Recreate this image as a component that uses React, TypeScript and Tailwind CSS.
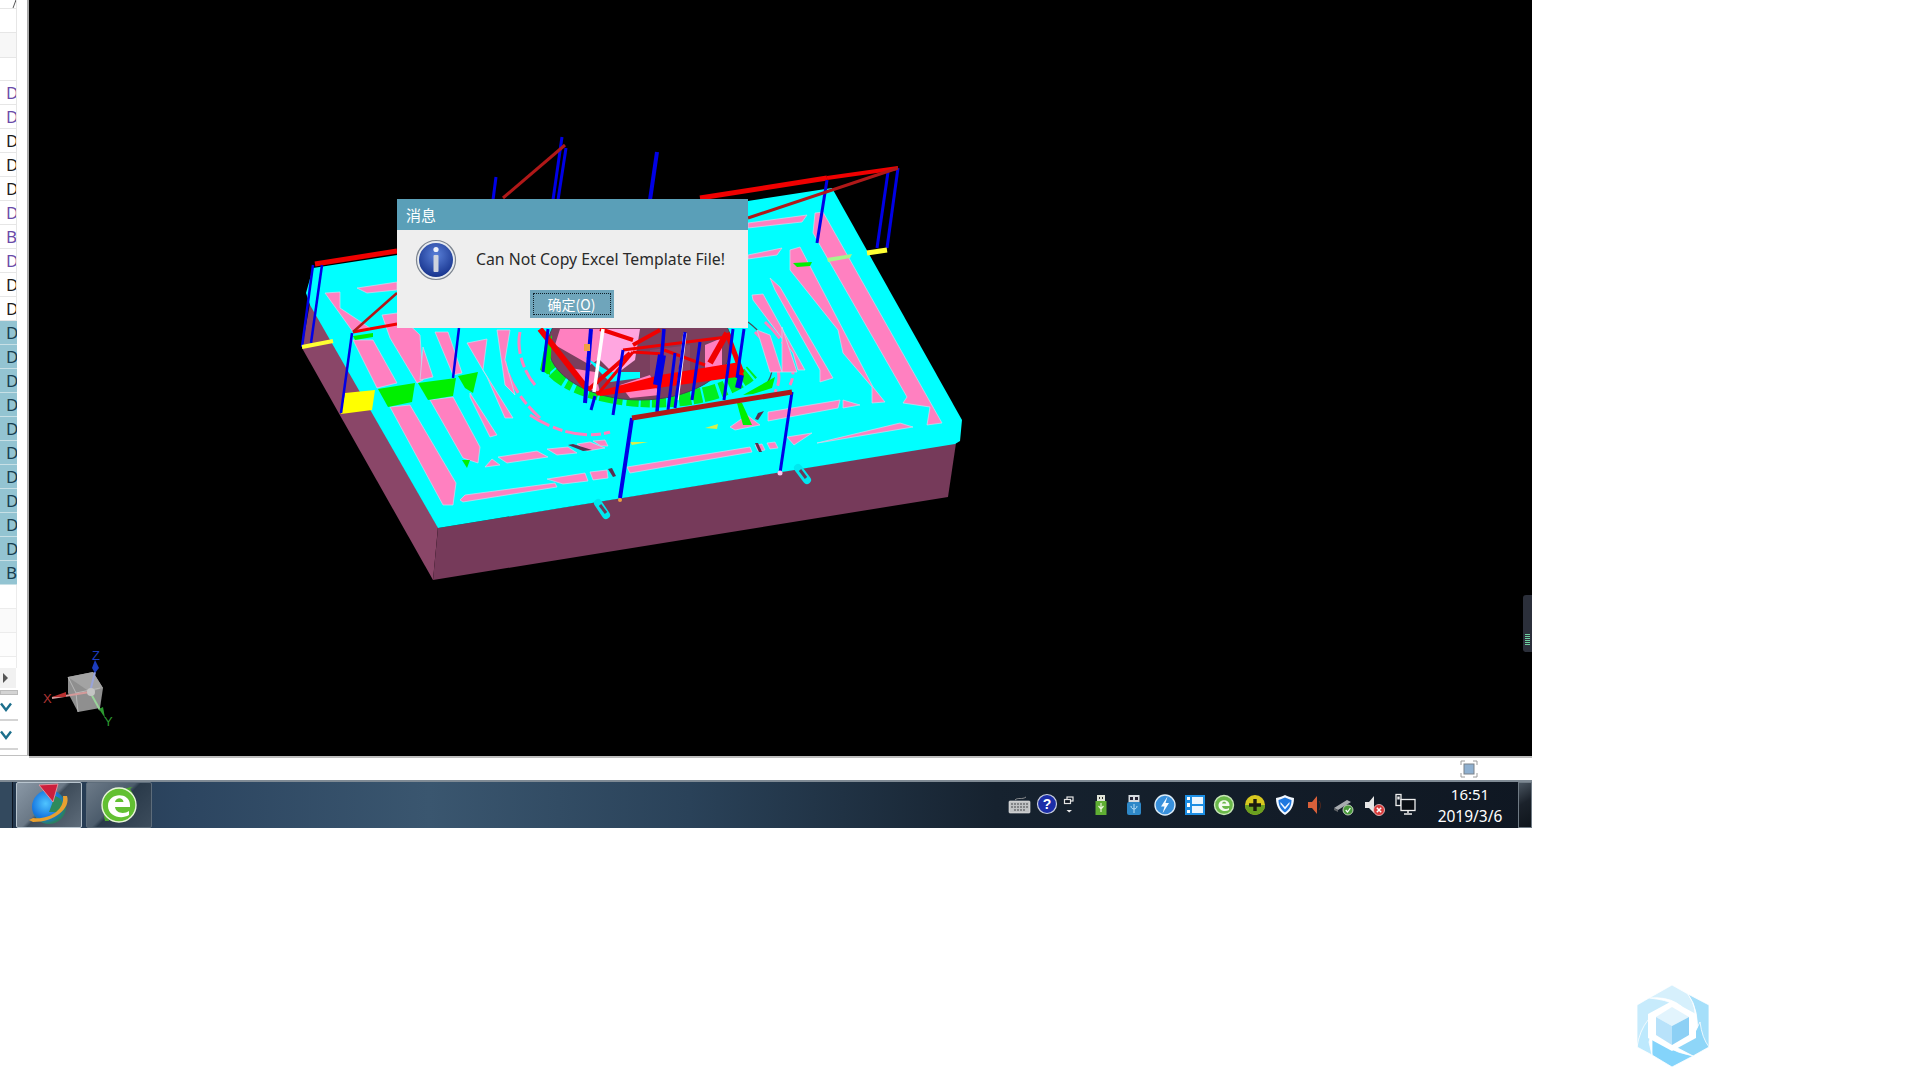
import React from "react";

const pinks: string[] = [
  "815,213 823,212 942,423 927,425 930,407 903,403 907,397 813,233",
  "790,250 800,247 873,387 885,402 872,403 872,387 843,353 838,330 790,270",
  "770,278 780,287 833,378 820,382 820,370 775,290",
  "752,295 763,294 805,370 798,370 793,353 753,300",
  "782,327 797,372 782,372",
  "748,223 807,215 802,222 748,228",
  "748,255 782,248 777,255 748,259",
  "768,412 840,400 838,408 768,421",
  "843,400 860,405 843,408",
  "817,443 900,423 913,427 824,442",
  "787,437 812,433 794,445",
  "627,467 750,447 752,452 630,473",
  "755,445 762,444 765,450 758,451",
  "767,443 775,442 778,448 770,449",
  "590,472 607,470 608,478 593,480",
  "547,479 585,473 588,481 563,484",
  "460,500 465,495 555,483 557,487 463,502",
  "498,457 537,451 548,457 507,463",
  "547,449 568,447 577,453 557,455",
  "577,444 590,442 605,448 587,451",
  "593,441 605,440 608,446 601,446",
  "485,467 492,459 500,465",
  "353,340 373,340 397,383 377,388",
  "390,407 410,405 456,483 453,505 443,505",
  "325,293 340,292 340,308 370,328 353,332",
  "382,315 397,313 420,335 423,380 417,383 390,338",
  "430,400 453,397 480,447 478,463 463,458",
  "423,347 433,377 420,380",
  "435,332 448,332 462,373 453,375",
  "467,343 487,339 483,370 513,418 505,418 487,377",
  "470,393 497,435 490,437 470,397",
  "357,288 397,282 397,290 367,293",
  "497,330 510,330 505,360 515,395 505,385",
  "730,427 747,415 760,425 735,430",
  "757,330 770,335 782,372 770,372",
];

const greens: string[] = [
  "378,389 415,383 412,402 388,407",
  "418,383 456,378 453,396 428,400",
  "458,376 478,372 473,393 465,388",
  "353,336 373,333 373,337 355,340",
  "462,460 470,460 467,468",
  "793,263 812,262 810,266 797,267",
  "743,395 775,377 772,388 753,394",
  "737,403 742,403 752,425 743,425",
  "545,345 552,335 550,375 540,370",
];

type L = [number, number, number, number, number];
const blues: L[] = [
  [562, 137, 553, 200, 3],
  [566, 148, 558, 200, 3],
  [496, 177, 493, 200, 3],
  [657, 152, 650, 200, 4],
  [827, 180, 817, 243, 3],
  [888, 172, 877, 248, 3],
  [898, 168, 887, 248, 3],
  [313, 265, 302, 347, 2.5],
  [322, 265, 311, 343, 2.5],
  [352, 333, 341, 413, 2.5],
  [459, 328, 453, 378, 2.5],
  [548, 329, 543, 372, 3],
  [591, 329, 585, 403, 4],
  [595, 396, 591, 410, 3],
  [623, 350, 613, 415, 3],
  [664, 329, 657, 412, 3.5],
  [662, 355, 657, 385, 8],
  [675, 353, 668, 410, 3],
  [685, 332, 675, 408, 3],
  [700, 342, 692, 400, 3],
  [733, 329, 724, 400, 3],
  [744, 329, 737, 378, 3],
  [741, 375, 738, 388, 6],
  [632, 418, 620, 498, 4],
  [792, 392, 780, 473, 3],
];

const darkReds: L[] = [
  [898, 168, 748, 218, 3],
  [565, 145, 503, 198, 3],
  [397, 293, 353, 332, 2.5],
  [632, 418, 792, 392, 5],
];

const reds: L[] = [
  [315, 264, 397, 251, 5],
  [700, 198, 827, 178, 5],
  [827, 178, 898, 168, 4],
  [397, 324, 353, 332, 3],
  [540, 329, 588, 390, 6],
  [588, 390, 630, 353, 4],
  [623, 350, 727, 337, 3],
  [727, 333, 710, 363, 6],
  [727, 333, 742, 373, 5],
  [664, 350, 705, 365, 3],
  [600, 329, 633, 340, 4],
  [633, 352, 664, 354, 3],
  [633, 345, 660, 330, 4],
  [597, 395, 633, 352, 3],
];

const arcs: string[] = [
  "M505 335 C498 365 515 395 540 418",
  "M520 332 C516 350 524 372 535 385",
  "M755 332 C775 352 785 375 775 392",
  "M765 322 C790 345 798 370 790 385",
  "M530 415 C560 435 590 438 610 432",
];

function ModelSvg() {
  return (
    <svg className="block w-full h-full" viewBox="29 0 1503 756" fill="none">
      <polygon points="310,303 438,527 433,580 302,348" fill="#8a4668" />
      <polygon points="438,528 956,443 948,497 433,580" fill="#763a5a" />
      <polygon points="313,268 832,188 962,420 960,441 955,444 438,528 310,305 306,293" fill="#00ffff" />
      <path d="M748 322 C772 340 782 368 762 390" stroke="#454f58" strokeWidth="1.3" />
      {arcs.map((d, i) => (
        <path key={i} d={d} stroke="#ff80c0" strokeWidth="3" strokeDasharray="22 4 10 3" />
      ))}
      {/* dish */}
      <path
        d="M548 362 C565 402 700 418 752 372"
        stroke="#00ee20"
        strokeWidth="15"
        strokeDasharray="9 2 14 3 6 4 12 2"
      />
      <ellipse cx="640" cy="345" rx="92" ry="55" fill="#7a3f5e" stroke="#404a50" strokeWidth="1" />
      <polygon points="560,329 600,329 620,345 590,365 555,345" fill="#ff80c0" />
      <polygon points="570,368 595,372 600,392 585,388" fill="#ff80c0" />
      <polygon points="600,329 640,329 635,360 615,375 600,360" fill="#ffa6e0" />
      <polygon points="650,350 690,345 690,370 650,380" fill="#8a4668" />
      <polygon points="705,345 722,338 722,365 705,372" fill="#ff80c0" />
      <polygon points="620,385 650,375 660,395 630,398" fill="#ff80c0" />
      <polygon points="585,357 610,372 640,372 640,378 610,382" fill="#00ffff" />
      {pinks.map((p, i) => (
        <polygon key={i} points={p} fill="#ff80c0" stroke="#c5dff0" strokeWidth="0.7" />
      ))}
      {greens.map((p, i) => (
        <polygon key={i} points={p} fill="#00f000" />
      ))}
      <polygon points="827,258 852,254 850,258 828,262" fill="#a6f58c" />
      <polygon points="345,393 375,390 372,410 341,414" fill="#ffff00" />
      <polygon points="630,442 648,442 632,445" fill="#d6f04c" />
      <polygon points="705,428 718,424 717,429" fill="#d6f04c" />
      <polygon points="568,445 573,444 592,450 583,451" fill="#5a3050" />
      <polygon points="608,469 612,468 616,476 613,477" fill="#5a3050" />
      <polygon points="758,413 764,411 758,420 755,419" fill="#5a3050" />
      <polygon points="755,443 758,443 762,452 759,452" fill="#5a3050" />
      <path d="M598 503 L606 515" stroke="#00e8ef" strokeWidth="8" strokeLinecap="round" />
      <path d="M600 505 L606 513" stroke="#6a3a58" strokeWidth="3" />
      <path d="M798 468 L807 480" stroke="#00e8ef" strokeWidth="8" strokeLinecap="round" />
      <path d="M800 470 L806 478" stroke="#6a3a58" strokeWidth="3" />
      <polygon points="595,392 660,375 740,362 744,376 600,396" fill="#ff0000" />
      {reds.map(([a, b, c, d, w], i) => (
        <line key={i} x1={a} y1={b} x2={c} y2={d} stroke="#f00000" strokeWidth={w} />
      ))}
      <line x1="603" y1="329" x2="594" y2="392" stroke="#ffffff" strokeWidth="3.5" />
      <line x1="685" y1="333" x2="677" y2="400" stroke="#ffffff" strokeWidth="3.5" />
      {blues.map(([a, b, c, d, w], i) => (
        <line key={i} x1={a} y1={b} x2={c} y2={d} stroke="#0000e6" strokeWidth={w} />
      ))}
      {darkReds.map(([a, b, c, d, w], i) => (
        <line key={i} x1={a} y1={b} x2={c} y2={d} stroke="#b01818" strokeWidth={w} />
      ))}
      <line x1="302" y1="347" x2="333" y2="341" stroke="#ffff33" strokeWidth="4" />
      <line x1="867" y1="253" x2="887" y2="250" stroke="#ffff33" strokeWidth="5" />
      <circle cx="620" cy="500" r="2" fill="#f0a040" />
      <circle cx="780" cy="473" r="2.5" fill="#f6c8f0" />
      <rect x="584" y="344" width="6" height="7" fill="#f0a040" />
      <polygon points="68,677 93,672 103,688 100,708 78,712 68,693" fill="#8f8f8f" />
      <polygon points="68,677 93,672 103,688 90,692" fill="#a3a3a3" />
      <path d="M68 677 L76 693 L78 712 M76 693 L100 688" stroke="#b8b8b8" strokeWidth="1" />
      <line x1="52" y1="698" x2="90" y2="692" stroke="#d49a9a" strokeWidth="2" />
      <polygon points="52,697 66,692 66,697" fill="#b83030" />
      <line x1="90" y1="692" x2="95" y2="672" stroke="#9aa4d8" strokeWidth="2" />
      <polygon points="95,660 99,668 95,673 92,668" fill="#1c3cbc" />
      <line x1="90" y1="692" x2="100" y2="710" stroke="#9ad49a" strokeWidth="2" />
      <polygon points="105,718 99,709 103,707" fill="#2c9a30" />
      <circle cx="91" cy="692" r="4" fill="#c4c4c4" />
      <text x="43" y="703" fontSize="13" fill="#b03434" fontFamily="Liberation Sans">X</text>
      <text x="92" y="660" fontSize="13" fill="#1c3cbc" fontFamily="Liberation Sans">Z</text>
      <text x="104" y="726" fontSize="13" fill="#2c9a30" fontFamily="Liberation Sans">Y</text>
    </svg>
  );
}

const rows = ["D", "D", "D", "D", "D", "D", "B", "D", "D", "D"];
const purple = [0, 1, 5, 6, 7];
const blueRows = ["D", "D", "D", "D", "D", "D", "D", "D", "D", "D", "B"];

function Chevron() {
  return (
    <svg width="14" height="10" viewBox="0 0 14 10" fill="none">
      <path d="M1 1.5 L6 8 L11 1.5" stroke="#1c6f8c" strokeWidth="2.4" />
    </svg>
  );
}

function Sidebar() {
  return (
    <div className="w-[29px] h-[756px] border-r-2 border-[#a8a8a8] bg-white flex flex-col shrink-0 border-b border-b-[#c0c0c0]">
      <div className="w-[17px] h-[9px] border-b border-[#e6e6e6] border-r relative overflow-hidden">
        <span className="block h-[8px] w-[5px] ml-[10px] border-r border-[#555] skew-x-[-20deg]" />
      </div>
      <div className="w-[17px] h-[24px] border-b border-r border-[#e6e6e6]" />
      <div className="w-[17px] h-[25px] border-b border-r border-[#e6e6e6] bg-[#f7f7f7]" />
      <div className="w-[17px] h-[23px] border-b border-r border-[#e6e6e6]" />
      {rows.map((r, i) => (
        <div
          key={i}
          className={`w-[17px] h-[24px] border-b border-r border-[#e6e6e6] pl-[6px] text-[17px] leading-[23px] overflow-hidden ${
            purple.includes(i) ? "text-[#6a4aa8]" : "text-[#1c1c1c]"
          }`}
        >
          {r}
        </div>
      ))}
      {blueRows.map((r, i) => (
        <div
          key={i}
          className="w-[17px] h-[24px] border-b border-[#c8e0e6] bg-[#93c4d2] pl-[6px] text-[17px] leading-[23px] text-[#173e50] overflow-hidden"
        >
          {r}
        </div>
      ))}
      <div className="w-[17px] h-[24px] border-b border-r border-[#ececec]" />
      <div className="w-[17px] h-[24px] border-b border-r border-[#ececec] bg-[#fafafa]" />
      <div className="w-[17px] h-[24px] border-b border-r border-[#ececec] bg-[#fdfdfd]" />
      <div className="w-[17px] h-[11px] border-r border-[#ececec]" />
      <div className="w-[16px] h-[20px] bg-[#f1f1f1] flex items-center pl-[3px]">
        <svg width="6" height="10" viewBox="0 0 6 10">
          <path d="M0 0 L5 5 L0 10 Z" fill="#555" />
        </svg>
      </div>
      <div className="w-[18px] h-[5px] mt-[2px] bg-[#d4d4d4] border border-[#bcbcbc]" />
      <div className="h-[26px] w-[18px] flex items-center border-b-2 border-[#d4d4d4]">
        <Chevron />
      </div>
      <div className="h-[29px] w-[18px] flex items-center border-b-2 border-[#d4d4d4]">
        <Chevron />
      </div>
    </div>
  );
}

function InfoIcon() {
  return (
    <svg width="42" height="42" viewBox="0 0 42 42" className="shrink-0">
      <defs>
        <radialGradient id="ig" cx="50%" cy="35%" r="65%">
          <stop offset="0%" stopColor="#5a80d8" />
          <stop offset="100%" stopColor="#17348e" />
        </radialGradient>
      </defs>
      <circle cx="21" cy="21" r="19.5" fill="#e8ecf0" stroke="#7d8590" strokeWidth="1.2" />
      <circle cx="21" cy="21" r="17" fill="url(#ig)" />
      <circle cx="21" cy="10.5" r="2.6" fill="#eef2fa" />
      <rect x="18.5" y="16" width="5" height="17" rx="1" fill="#cfd4de" />
    </svg>
  );
}

function Dialog() {
  return (
    <div className="absolute left-[368px] top-[199px] w-[351px] h-[129px] bg-[#eeeeee] flex flex-col">
      <div className="h-[31px] bg-[#5a9fb8] px-[9px] text-white text-[15px] leading-[31px] font-['Noto_Sans_CJK_SC',sans-serif]">
        消息
      </div>
      <div className="flex items-center pl-[18px] pt-[9px]">
        <InfoIcon />
        <span className="ml-[19px] text-[15.8px] text-[#2a2a2a] font-['Noto_Sans','Noto_Sans_CJK_SC',sans-serif] whitespace-nowrap">
          Can Not Copy Excel Template File!
        </span>
      </div>
      <div className="flex justify-center mt-[9px] ml-[-2px]">
        <div className="w-[84px] h-[28px] bg-[#6fa5bb] p-[3px]">
          <div className="w-full h-full border border-dotted border-[#10202a] flex items-center justify-center text-white text-[14px] font-['Noto_Sans_CJK_SC',sans-serif]">
            确定(<span className="underline">O</span>)
          </div>
        </div>
      </div>
    </div>
  );
}

function I({ ml, children }: { ml: string; children: React.ReactNode }) {
  return (
    <svg width="24" height="24" viewBox="0 0 24 24" className={`shrink-0 ${ml}`} fill="none">
      {children}
    </svg>
  );
}

function Taskbar() {
  return (
    <div className="w-[1532px] h-[48px] flex items-center relative border-t-2 border-[#7f8a94] bg-[linear-gradient(90deg,#22354a_0%,#2c4560_12%,#3a566f_28%,#2a4259_45%,#16222f_65%,#0f1722_100%)]">
      <div className="w-[13px] h-[46px] shrink-0 border-r border-[#0c1420] bg-[#33495e]" />
      <div className="ml-[3px] w-[66px] h-[46px] shrink-0 rounded-[2px] border border-[#b8c4ce] bg-[linear-gradient(135deg,#8a98a6,#6a7886_45%,#3e4c5a_50%,#5e6c7a)] flex items-center justify-center">
        <svg width="48" height="46" viewBox="0 0 48 46">
          <defs>
            <radialGradient id="gl" cx="40%" cy="40%" r="60%">
              <stop offset="0%" stopColor="#4fc4ff" />
              <stop offset="70%" stopColor="#1676e0" />
              <stop offset="100%" stopColor="#2a8060" />
            </radialGradient>
          </defs>
          <circle cx="24" cy="25" r="17" fill="url(#gl)" />
          <path d="M30 14 C38 16 40 24 34 30 L24 30 Z" fill="#2e8a5c" />
          <polygon points="14,3 33,2 28,20" fill="#cc1f3c" stroke="#f0a0a8" strokeWidth="0.8" />
          <path d="M42 14 C46 26 30 40 8 40 L4 38 L8 36 C24 38 40 28 38 14 Z" fill="#e8a030" />
        </svg>
      </div>
      <div className="ml-[4px] w-[66px] h-[46px] shrink-0 rounded-[2px] border border-[#5d6c7a] bg-[linear-gradient(135deg,#6c7a88,#4c5c6c_45%,#2a3a4a_50%,#3c4c5c)] flex items-center justify-center">
        <svg width="44" height="44" viewBox="0 0 44 44">
          <path d="M8 38 C4 22 14 6 36 4 C30 6 36 8 36 12 L22 8 C12 14 10 28 12 38 Z" fill="#4aa82c" />
          <circle cx="22" cy="22" r="17" fill="#62c032" stroke="#e8f6d8" strokeWidth="1.4" />
          <path d="M11 23 C11 9 33 9 33 22 L33 24 L18 24 C19 31 28 31 32 28 L32 32 C24 37 11 33 11 23 Z M18 19 L26.5 19 C26 14 19 14 18 19 Z" fill="#ffffff" fillRule="evenodd" />
        </svg>
      </div>

      <I ml="ml-[856px]">
        <path d="M7 7 C10 4 14 7 18 4" stroke="#aaa" strokeWidth="0.8" />
        <rect x="1" y="8" width="21" height="12" rx="1" fill="#c0c2c4" stroke="#eee" strokeWidth="0.6" />
        <path d="M3 11 H20 M3 14 H20 M6 17 H17" stroke="#44474a" strokeWidth="1.2" strokeDasharray="2 1" />
      </I>
      <I ml="ml-[3px]">
        <circle cx="12" cy="11" r="9.5" fill="#1c2ea8" stroke="#c8cede" strokeWidth="1.2" />
        <text x="12" y="16" textAnchor="middle" fontSize="14" fontWeight="700" fill="#fff" fontFamily="Liberation Sans">?</text>
      </I>
      <I ml="ml-[-1px]">
        <rect x="9" y="4" width="6" height="4" stroke="#e4e4e4" strokeWidth="1.2" />
        <rect x="6.5" y="6.5" width="6" height="4" fill="#0f1722" stroke="#e4e4e4" strokeWidth="1.2" />
        <path d="M8.5 17 H14 L11.2 19.5 Z" fill="#e8e8e8" />
      </I>
      <I ml="ml-[7px]">
        <rect x="8" y="2" width="8" height="6" fill="#dfe4d8" />
        <path d="M10 4 h1 v2 h-1 z M13 4 h1 v2 h-1 z" fill="#333" />
        <rect x="6.5" y="8" width="11" height="14" fill="#5fae33" />
        <path d="M12 10 V19 M9.5 13 L12 16 L14.5 13" stroke="#e6f4d6" strokeWidth="1.2" />
      </I>
      <I ml="ml-[9px]">
        <rect x="6.5" y="2" width="11" height="7" fill="#d6dbe0" />
        <path d="M8 4 h3 v3 h-3 z M13 4 h3 v3 h-3 z" fill="#223" />
        <rect x="5" y="9" width="14" height="13" rx="2" fill="#2e88c8" />
        <path d="M12 11 V20 M9 13 C9 17 15 17 15 13" stroke="#b7def6" strokeWidth="1" />
      </I>
      <I ml="ml-[7px]">
        <circle cx="12" cy="12" r="10" fill="#3890dc" stroke="#dcecf8" strokeWidth="1.4" />
        <path d="M14.5 3.5 L8 13.5 H11.5 L9.5 20.5 L16 10 H12.5 Z" fill="#f6fbff" />
      </I>
      <I ml="ml-[6px]">
        <rect x="2" y="2" width="20" height="20" fill="#1c8ee4" />
        <rect x="4" y="4" width="3" height="3" fill="#fff" />
        <rect x="4" y="10" width="3" height="4" fill="#fff" />
        <rect x="4" y="17" width="3" height="3" fill="#fff" />
        <rect x="9" y="4" width="11" height="7" fill="#eaf5fe" />
        <rect x="9" y="13" width="11" height="7" fill="#eaf5fe" />
      </I>
      <I ml="ml-[5px]">
        <circle cx="12" cy="12" r="9.5" fill="#6ab84a" stroke="#c8e6b8" strokeWidth="1.4" />
        <path d="M6.5 12.5 C6.5 5.5 17.5 5.5 17.5 12 L17.5 13 L10 13 C10.5 16.5 15 16.5 17 15 L17 17 C13 19.5 6.5 17.5 6.5 12.5 Z M10 10.5 L14.2 10.5 C14 8 10.5 8 10 10.5 Z" fill="#f4faf0" fillRule="evenodd" />
      </I>
      <I ml="ml-[7px]">
        <circle cx="12" cy="12" r="10" fill="#d8c820" />
        <path d="M2 12 A10 10 0 0 0 22 12 Z" fill="#6aa020" />
        <path d="M12 6 V18 M6 12 H18" stroke="#1a1a10" strokeWidth="3.4" />
      </I>
      <I ml="ml-[6px]">
        <path d="M3 5 C8 4 10 3 12 2 C14 3 16 4 21 5 C21 14 17 19 12 22 C7 19 3 14 3 5 Z" fill="#f2f8ff" />
        <path d="M5.5 7 C9 6 10.5 5 12 4.5 C13.5 5 15 6 18.5 7 C18.5 13 16 17 12 19.5 C8 17 5.5 13 5.5 7 Z" fill="#1e78e0" />
        <path d="M7.5 9 L12 14 L16.5 9 L16.5 11 L12 16.5 L7.5 11 Z" fill="#f2f8ff" />
      </I>
      <I ml="ml-[6px]">
        <path d="M5 9 H9 L14 3 V21 L9 15 H5 Z" fill="#d8603a" />
        <path d="M16 8 C18 11 18 14 16 17" stroke="#5a2a1c" strokeWidth="1" />
      </I>
      <I ml="ml-[5px]">
        <path d="M2 15 L15 7 L19 9 L6 17 Z" fill="#a8acb0" />
        <path d="M2 15 L6 17 L6 19 L2 17 Z" fill="#606468" />
        <circle cx="16" cy="17" r="5" fill="#4a9a3c" stroke="#dfe8d8" strokeWidth="0.8" />
        <path d="M13.7 17 L15.5 19 L18.4 15.2" stroke="#fff" strokeWidth="1.2" />
      </I>
      <I ml="ml-[7px]">
        <path d="M2 9 H6 L11 3 V20 L6 15 H2 Z" fill="#e6e6e6" />
        <circle cx="16" cy="17" r="5.5" fill="#d83a3a" stroke="#f4d0d0" strokeWidth="0.8" />
        <path d="M13.8 14.8 L18.2 19.2 M18.2 14.8 L13.8 19.2" stroke="#fff" strokeWidth="1.5" />
      </I>
      <I ml="ml-[6px]">
        <rect x="3" y="1.5" width="5" height="11" fill="#0f1722" stroke="#eee" strokeWidth="1.3" />
        <rect x="4.3" y="3.5" width="2.4" height="3" fill="#eee" />
        <rect x="8" y="6.5" width="14" height="11" fill="#0a0e14" stroke="#eee" strokeWidth="1.3" />
        <path d="M15 18 V20 M11 21 H19" stroke="#eee" strokeWidth="1.5" />
      </I>
      <div className="ml-[13px] w-[80px] shrink-0 flex flex-col items-center text-white font-['Noto_Sans',sans-serif] leading-[22px] whitespace-nowrap">
        <span className="text-[15px]">16:51</span>
        <span className="text-[15.5px]">2019/3/6</span>
      </div>
      <div className="ml-[8px] w-[14px] h-[46px] shrink-0 border border-[#6f7a84] bg-[linear-gradient(150deg,#4a5560,#1b222b_45%,#0e141b)]" />
    </div>
  );
}

function Logo() {
  return (
    <svg className="absolute left-[1632px] top-[981px]" width="82" height="90" viewBox="1632 981 82 90">
      <g stroke="#ffffff" strokeWidth="0.8">
        <path d="M1672 985 L1649 998 Q1682 995 1694 1024 Q1698 1008 1688 994 Z" fill="#d6f0fc" />
        <path d="M1688 994 L1709 1005 L1709 1047 L1697 1040 Q1700 1010 1688 994 Z" fill="#a5dffa" />
        <path d="M1709 1047 L1693 1056 L1672 1045 Q1692 1044 1700 1022 Q1702 1038 1709 1047 Z" fill="#8ed6f8" />
        <path d="M1693 1056 L1672 1067 L1652 1055 L1652 1032 Q1662 1050 1693 1056 Z" fill="#84d4fb" />
        <path d="M1652 1055 L1637 1047 L1637 1020 Q1660 1008 1649 1042 Z" fill="#bde9fd" />
        <path d="M1637 1047 L1637 1005 L1649 998 Q1668 1000 1672 1004 Q1642 1014 1637 1047 Z" fill="#c7ebfc" />
      </g>
      <polygon points="1672,1001 1696,1014 1696,1038 1672,1051 1648,1038 1648,1014" fill="#ffffff" />
      <polygon points="1672,1007 1689,1017 1672,1026 1656,1017" fill="#e2f4fd" />
      <polygon points="1656,1017 1672,1026 1672,1045 1656,1035" fill="#b8e2fa" />
      <polygon points="1689,1017 1672,1026 1672,1045 1689,1035" fill="#8dd0f5" />
    </svg>
  );
}

export default function App() {
  return (
    <div className="relative w-[1920px] h-[1080px] bg-white overflow-hidden font-['Noto_Sans',sans-serif]">
      <div className="w-[1532px] h-[780px] flex">
        <Sidebar />
        <div className="flex-1 flex flex-col">
          <div className="relative h-[756px] bg-black">
            <ModelSvg />
            <Dialog />
            <div className="absolute right-0 top-[595px] w-[9px] h-[57px] rounded-l-[3px] bg-[#2b2f3a] flex flex-col items-center pt-[39px] gap-[1px]">
              {[0, 1, 2, 3, 4, 5].map((k) => (
                <span key={k} className="block w-[5px] h-[1px] bg-[#6fd0a0]" />
              ))}
            </div>
          </div>
          <div className="h-[24px] border-t-2 border-[#bdbdbd] flex items-center justify-end pr-[54px]">
            <svg width="18" height="18" viewBox="0 0 18 18" fill="none">
              <path d="M1 5 V1 H5 M13 1 H17 V5 M17 13 V17 H13 M5 17 H1 V13" stroke="#9a9a9a" strokeWidth="1" />
              <rect x="4" y="4" width="10" height="10" fill="#8fb0d0" stroke="#7a828a" />
            </svg>
          </div>
        </div>
      </div>
      <Taskbar />
      <Logo />
    </div>
  );
}
